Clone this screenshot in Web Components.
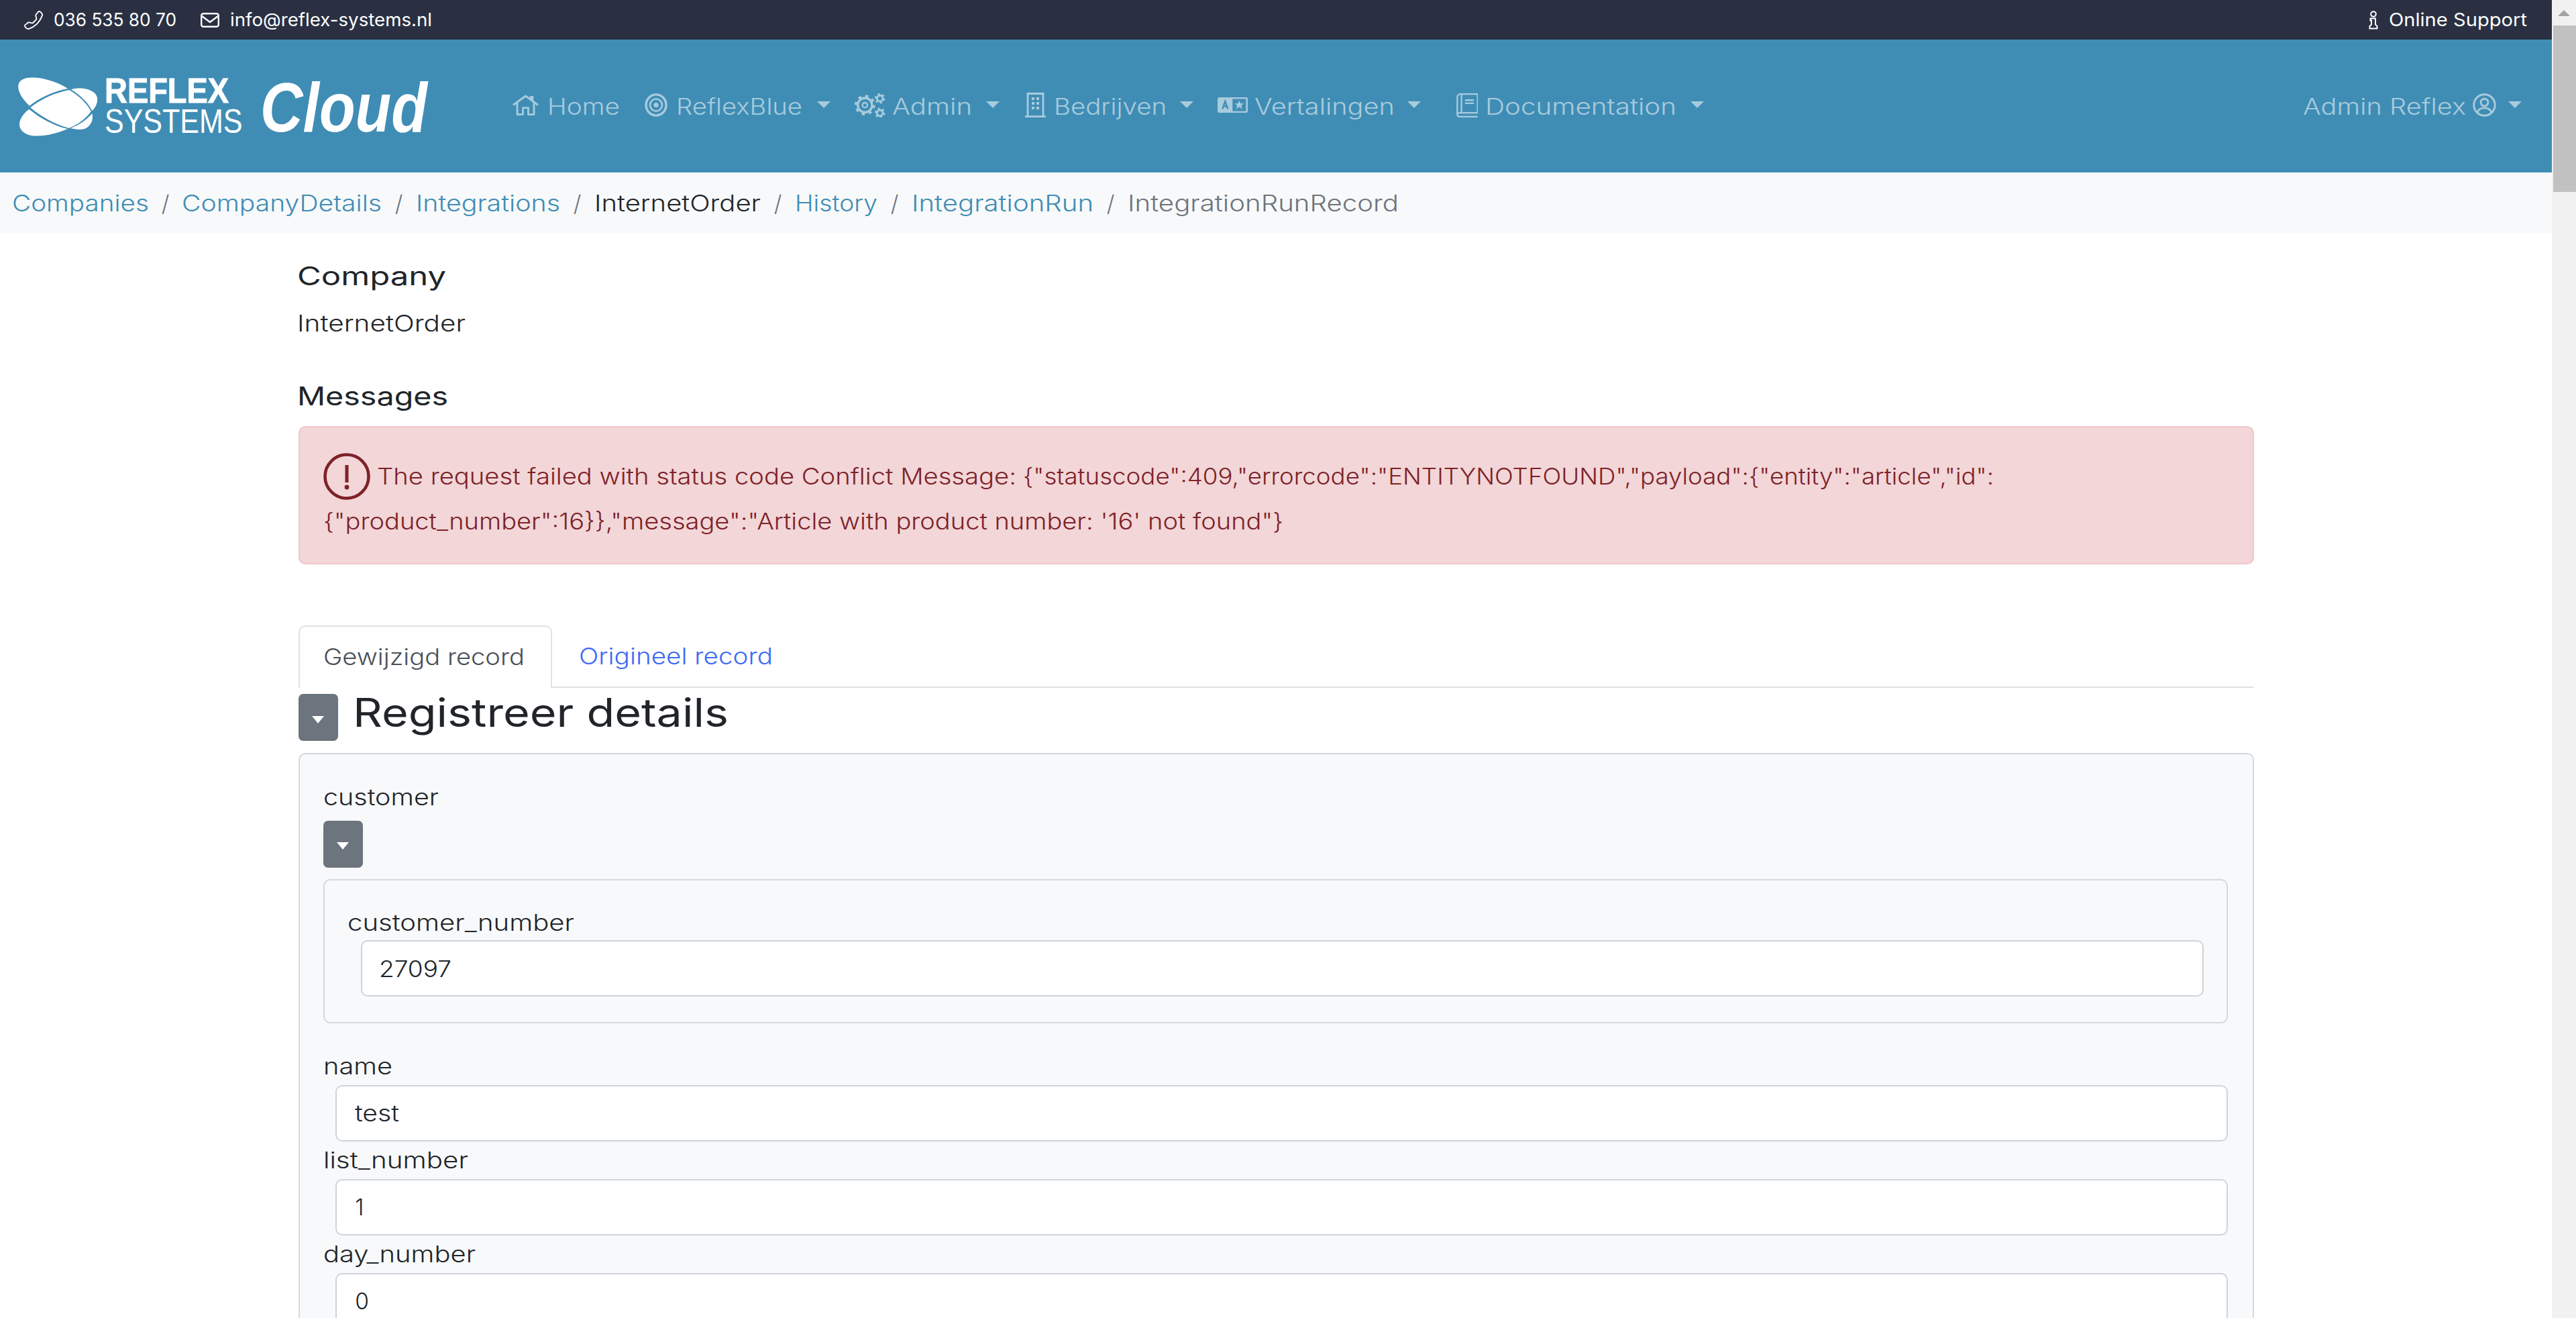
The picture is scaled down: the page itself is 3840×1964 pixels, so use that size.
<!DOCTYPE html>
<html lang="nl">
<head>
<meta charset="utf-8">
<title>Reflex Systems Cloud</title>
<style>
html,body{margin:0;padding:0;height:1964px;overflow:hidden;background:#fff}
body{font-family:Inter,"Noto Sans",sans-serif;font-size:33.6px;font-weight:300;color:#212529}
</style>
</head>
<body>
<rs-app>
  <rs-main>
    <rs-topbar>
      <rs-contact>
        <svg slot="icon" width="28" height="28" viewBox="0 0 16 16" fill="#fff"><path transform="translate(16 0) scale(-1 1)" d="M3.654 1.328a.678.678 0 0 0-1.015-.063L1.605 2.3c-.483.484-.661 1.169-.45 1.77a17.568 17.568 0 0 0 4.168 6.608 17.569 17.569 0 0 0 6.608 4.168c.601.211 1.286.033 1.77-.45l1.034-1.034a.678.678 0 0 0-.063-1.015l-2.307-1.794a.678.678 0 0 0-.58-.122l-2.19.547a1.745 1.745 0 0 1-1.657-.459L5.482 8.062a1.745 1.745 0 0 1-.46-1.657l.548-2.19a.678.678 0 0 0-.122-.58L3.654 1.328zM1.884.511a1.745 1.745 0 0 1 2.612.163L6.29 2.98c.329.423.445.974.315 1.494l-.547 2.19a.678.678 0 0 0 .178.643l2.457 2.457a.678.678 0 0 0 .644.178l2.189-.547a1.745 1.745 0 0 1 1.494.315l2.306 1.794c.829.645.905 1.87.163 2.611l-1.034 1.034c-.74.74-1.846 1.065-2.877.702a18.634 18.634 0 0 1-7.01-4.42 18.634 18.634 0 0 1-4.42-7.009c-.362-1.03-.037-2.137.703-2.877L1.885.511z"/></svg>
        <fit-text w="183">036 535 80 70</fit-text>
      </rs-contact>
      <rs-contact style="margin-left:36px">
        <svg slot="icon" width="28" height="22" viewBox="0 0 28 22" fill="none" stroke="#fff" stroke-width="2.4"><rect x="1.2" y="1.2" width="25.6" height="19.6" rx="3"/><path d="M2 5l12 9 12-9"/></svg>
        <fit-text w="301">info@reflex-systems.nl</fit-text>
      </rs-contact>
      <rs-contact style="margin-left:auto">
        <svg slot="icon" width="14" height="28" viewBox="0 0 14 28" fill="none" stroke="#fff" stroke-width="2"><circle cx="7" cy="5" r="3.8"/><path d="M2.5 11.5h7.5v9l2.5 2.5v3.5h-11v-3.5l2.5-2.5v-6h-1.5z"/></svg>
        <fit-text w="206">Online Support</fit-text>
      </rs-contact>
    </rs-topbar>

    <rs-navbar>
      <rs-logo>
        <svg slot="mark" width="140" height="105" viewBox="0 0 420 315" fill="#fff">
          <path d="M72 155C40 125 18 90 22 62C28 30 70 25 110 30C160 36 215 58 243 78C180 90 115 120 72 155Z"/>
          <path d="M258 82C290 72 340 75 365 100C385 122 375 155 352 178C335 140 295 105 258 82Z"/>
          <path d="M76 163C120 125 190 95 250 84C292 110 330 145 347 180C325 212 290 238 248 255C190 240 125 205 76 163Z"/>
          <path d="M70 170C120 212 185 245 242 258C200 278 130 295 80 288C40 280 22 255 28 228C33 205 50 185 70 170Z"/>
          <path d="M352 190C358 215 350 240 325 255C305 265 275 260 256 256C295 240 330 215 352 190Z"/>
        </svg>
      </rs-logo>
      <nav-item style="margin-left:130px;--g:12px">
        <svg slot="icon" width="41" height="31" viewBox="0 0 41 31" fill="none" stroke="currentColor" stroke-width="2.8" stroke-linejoin="round"><path d="M2 15.5L20.5 2L39 15.5M8 11v18.6h8.5v-10h8v10H33V11M31 9V3.5h-3v3"/></svg>
        <fit-text w="108">Home</fit-text>
      </nav-item>
      <nav-item caret style="margin-left:37px;--g:13px;--c:22px">
        <svg slot="icon" width="34" height="35" viewBox="0 0 34 35" fill="none" stroke="currentColor"><ellipse cx="17" cy="17.500" rx="15" ry="15.600" stroke-width="3.4"/><circle cx="17" cy="17.500" r="9" stroke-width="2.6"/><circle cx="17" cy="17.500" r="3.600" fill="currentColor" stroke="none"/></svg>
        <fit-text w="188">ReflexBlue</fit-text>
      </nav-item>
      <nav-item caret style="margin-left:36px;--g:10px;--c:21px">
        <svg slot="icon" width="46" height="36" viewBox="42 27 138 108" fill="none" stroke="currentColor"><circle cx="88" cy="80" r="32" stroke-width="10"/><circle cx="88" cy="80" r="41" stroke-width="10" stroke-dasharray="14 18.2"/><circle cx="88" cy="80" r="11" stroke-width="7"/><circle cx="155" cy="50" r="13" stroke-width="9"/><circle cx="155" cy="50" r="20" stroke-width="7" stroke-dasharray="10 10.9"/><circle cx="155" cy="115" r="13" stroke-width="9"/><circle cx="155" cy="115" r="20" stroke-width="7" stroke-dasharray="10 10.9"/></svg>
        <fit-text w="119">Admin</fit-text>
      </nav-item>
      <nav-item caret style="margin-left:38px;--g:12px;--c:20px">
        <svg slot="icon" width="31" height="37" viewBox="0 0 31 37" fill="none" stroke="currentColor" stroke-width="2.8"><path d="M0 35.600h31M4 35.600V1.500h23v34.100"/><path fill="currentColor" stroke="none" d="M10 7h4v4h-4zM17 7h4v4h-4zM10 14h4v4h-4zM17 14h4v4h-4zM10 21h4v4h-4zM17 21h4v4h-4z"/></svg>
        <fit-text w="168">Bedrijven</fit-text>
      </nav-item>
      <nav-item caret style="margin-left:36px;--g:10px;--c:19px">
        <svg slot="icon" width="45" height="23" viewBox="33 48 135 69"><rect x="33" y="48" width="135" height="69" rx="7" fill="currentColor"/><rect x="100" y="55" width="60" height="55" fill="#3f8db5"/><path d="M55 100L67 66L79 100M60 88H74" fill="none" stroke="#3f8db5" stroke-width="7"/><path d="M130 62l6 14h15l-12 9 5 16-14-10-14 10 5-16-12-9h15z" fill="currentColor"/></svg>
        <fit-text w="209">Vertalingen</fit-text>
      </nav-item>
      <nav-item caret style="margin-left:53px;--g:11px;--c:21px">
        <svg slot="icon" width="32" height="36" viewBox="29 27 97 109" fill="none" stroke="currentColor" stroke-width="7"><path d="M125 115V30H48C38 30 33 38 33 45V120C33 128 38 133 45 133H125M33 122C33 117 38 115 45 115H125M52 30V115M68 58H108M68 72H108"/></svg>
        <fit-text w="285">Documentation</fit-text>
      </nav-item>
      <nav-item caret reverse style="margin-left:auto;margin-right:45px;--g:10px;--c:18px">
        <svg slot="icon" width="35" height="35" viewBox="0 0 36 36" fill="none" stroke="currentColor" stroke-width="3"><circle cx="18" cy="18" r="16.200"/><circle cx="18" cy="14" r="5.600"/><path d="M7 29.500C9 23.500 14 22.500 18 22.500S27 23.500 29 29.500"/></svg>
        <fit-text w="243">Admin Reflex</fit-text>
      </nav-item>
    </rs-navbar>

    <rs-breadcrumb>
      <a><fit-text w="204">Companies</fit-text></a><i style="width:13px">/</i>
      <a><fit-text w="298">CompanyDetails</fit-text></a><i>/</i>
      <a><fit-text w="215">Integrations</fit-text></a><i>/</i>
      <b><fit-text w="248">InternetOrder</fit-text></b><i>/</i>
      <a><fit-text w="123">History</fit-text></a><i>/</i>
      <a><fit-text w="271">IntegrationRun</fit-text></a><i>/</i>
      <u><fit-text w="404">IntegrationRunRecord</fit-text></u>
    </rs-breadcrumb>

    <rs-content>
      <rs-section-title style="margin-top:36px"><fit-text w="222">Company</fit-text></rs-section-title>
      <rs-text style="margin-top:18px"><fit-text w="251">InternetOrder</fit-text></rs-text>
      <rs-section-title style="margin-top:55px"><fit-text w="225">Messages</fit-text></rs-section-title>
      <rs-alert>
        <fit-text w="953">The request failed with status code Conflict Message:</fit-text>
        <fit-text w="1447" style="margin-left:10px">{"statuscode":409,"errorcode":"ENTITYNOTFOUND","payload":{"entity":"article","id":</fit-text>
        <fit-text slot="second" w="1431">{"product_number":16}},"message":"Article with product number: '16' not found"}</fit-text>
      </rs-alert>
      <rs-tabs>
        <fit-text slot="active" w="300">Gewijzigd record</fit-text>
        <fit-text w="289">Origineel record</fit-text>
      </rs-tabs>
      <rs-heading><fit-text w="560">Registreer details</fit-text></rs-heading>
      <rs-card>
        <rs-label><fit-text w="172">customer</fit-text></rs-label>
        <rs-toggle style="margin-top:10px"></rs-toggle>
        <rs-box>
          <rs-field nested>
            <fit-text slot="label" w="338">customer_number</fit-text>
            <fit-text w="108">27097</fit-text>
          </rs-field>
        </rs-box>
        <rs-field style="margin-top:41px"><fit-text slot="label" w="103">name</fit-text><fit-text w="66">test</fit-text></rs-field>
        <rs-field style="margin-top:5px"><fit-text slot="label" w="216">list_number</fit-text>1</rs-field>
        <rs-field style="margin-top:5px"><fit-text slot="label" w="227">day_number</fit-text>0</rs-field>
      </rs-card>
    </rs-content>
  </rs-main>
  <rs-scrollbar></rs-scrollbar>
</rs-app>

<script>
const def = (name, html) => customElements.define(name, class extends HTMLElement {
  constructor() { super(); this.attachShadow({ mode: 'open' }).innerHTML = html; }
});

def('rs-app', `<style>:host{display:flex;width:3840px;height:1964px;overflow:hidden}</style><slot></slot>`);
def('rs-main', `<style>:host{display:flex;flex-direction:column;flex:1 1 auto;min-width:0;height:1964px;overflow:hidden}</style><slot></slot>`);
def('rs-scrollbar', `<style>
  :host{display:flex;flex-direction:column;flex:0 0 36px;width:36px;height:1964px;background:#f1f1f1}
  .up{height:38px;display:flex;align-items:flex-start;justify-content:center}
  .up::before{content:"";margin-top:15px;border-left:9px solid transparent;border-right:9px solid transparent;border-bottom:9px solid #a3a3a3}
  .thumb{height:248px;margin-left:2px;background:#c1c1c1}
</style><div class="up"></div><div class="thumb"></div>`);

def('rs-topbar', `<style>:host{display:flex;align-items:center;flex:0 0 59px;height:59px;box-sizing:border-box;padding:0 37px 0 36px;background:#2a3042;color:#fff;font-size:27px;font-weight:400}</style><slot></slot>`);
def('rs-contact', `<style>:host{display:flex;align-items:center;gap:16px}::slotted(svg){display:block;flex:none}</style><slot name="icon"></slot><slot></slot>`);

def('rs-navbar', `<style>:host{display:flex;align-items:center;flex:0 0 198px;height:198px;box-sizing:border-box;padding-left:20px;background:#3f8db5;color:#a8cbdd;font-size:33.6px}</style><slot></slot>`);
def('rs-logo', `<style>
  :host{display:flex;align-items:center;color:#fff;font-family:"Liberation Sans",Arial,sans-serif;flex:none}
  ::slotted(svg){display:block;flex:none}
  .words{width:205px;margin-left:-4px;height:90px;flex:none}
  .r,.s{display:block;white-space:nowrap;transform-origin:0 50%;line-height:45px}
  .r{font-weight:700;font-size:51px;transform:scaleX(.92);-webkit-text-stroke:1px #fff}
  .s{font-size:50px;transform:scaleX(.86);position:relative;top:1px}
  .c{width:245px;margin-left:27px;margin-top:3px;font-weight:700;font-style:italic;font-size:104px;line-height:90px;white-space:nowrap;transform-origin:0 50%;transform:scaleX(.845);flex:none}
</style><slot name="mark"></slot><div class="words"><span class="r">REFLEX</span><span class="s">SYSTEMS</span></div><div class="c">Cloud</div>`);
def('nav-item', `<style>
  :host{display:flex;align-items:center;flex:none}
  :host([reverse]) .ic{order:2;margin-left:var(--g);margin-right:0}
  :host([reverse]) .tx{order:1}
  :host([reverse]) .ca{order:3}
  .ic{display:flex;margin-right:var(--g);margin-top:-3px}
  .tx{display:block;line-height:50px;margin-top:2px}
  .ca{display:none;margin-left:var(--c);width:0;height:0;border-left:10.5px solid transparent;border-right:10.5px solid transparent;border-top:10.5px solid currentColor;margin-top:-4px}
  :host([caret]) .ca{display:block}
  ::slotted(svg){display:block}
</style><span class="ic"><slot name="icon"></slot></span><span class="tx"><slot></slot></span><span class="ca"></span>`);

def('rs-breadcrumb', `<style>
  :host{display:flex;align-items:center;flex:0 0 90px;height:90px;box-sizing:border-box;padding-left:18px;gap:18px;background:#f8f9fa;font-size:33.6px;color:#3f8db5}
  ::slotted(i){width:15px;text-align:center;font-style:normal;color:#6c757d;flex:none}
  ::slotted(a){color:#3f8db5}
  ::slotted(b){color:#212529;font-weight:300}
  ::slotted(u){color:#6c757d;text-decoration:none}
</style><slot></slot>`);

def('rs-content', `<style>:host{display:block;padding:0 444px 0 444.600px;flex:1 1 auto;min-height:0}</style><slot></slot>`);
def('rs-section-title', `<style>:host{display:block;font-size:38.4px;line-height:56px;color:#212529;font-weight:400;margin-left:-2px}</style><slot></slot>`);
def('rs-text', `<style>:host{display:block;font-size:33.6px;line-height:50px;color:#212529;margin-left:-2px}</style><slot></slot>`);
def('rs-alert', `<style>
  :host{display:block;margin-top:17px;height:206px;box-sizing:border-box;padding:39px 37px 0 35px;background:#f3d6d8;border:2.4px solid #f1c4c8;border-radius:10px;color:#7d2228;font-size:33.6px}
  .l1{display:flex;align-items:center;height:67px}
  .l2{display:flex;align-items:center;height:67px}
  svg{display:block;flex:none;margin-right:10px}
</style>
<div class="l1"><svg width="70" height="70" viewBox="0 0 70 70" fill="none" stroke="#7d2228" stroke-width="4.600"><circle cx="35" cy="35" r="32.500"/><path d="M35 18V44" stroke-width="5"/><circle cx="35" cy="51" r="3.400" fill="#7d2228" stroke="none"/></svg><slot></slot></div>
<div class="l2"><slot name="second"></slot></div>`);

def('rs-tabs', `<style>
  :host{display:flex;margin-top:91px;height:93px;box-sizing:border-box;border-bottom:2.4px solid #dee2e6;font-size:33.6px}
  .on{display:flex;align-items:center;box-sizing:border-box;height:93px;width:378.500px;padding-left:35px;padding-bottom:3px;border:2.4px solid #dee2e6;border-bottom:0;border-radius:10px 10px 0 0;background:#fff;color:#495057}
  .off{display:flex;align-items:center;height:90px;padding-left:39.500px;color:#3d6bf5}
</style><div class="on"><slot name="active"></slot></div><div class="off"><slot></slot></div>`);

const caret = `<span style="width:0;height:0;border-left:9.500px solid transparent;border-right:9.500px solid transparent;border-top:11px solid #fff;margin-top:6px"></span>`;
def('rs-toggle', `<style>:host{display:flex;align-items:center;justify-content:center;width:59px;height:70px;background:#6c757d;border-radius:7px;flex:none}</style>${caret}`);
def('rs-heading', `<style>
  :host{display:flex;align-items:flex-start;margin-top:9px;gap:22px;font-size:58.800px;line-height:56px;color:#212529;height:70px;font-weight:400}
</style><rs-toggle></rs-toggle><slot></slot>`);
def('rs-card', `<style>
  :host{display:block;margin-top:18px;box-sizing:border-box;padding:38.600px 36.600px 40px 35px;background:#f8f9fa;border:2.4px solid #d5d8db;border-radius:10px;min-height:1000px}
</style><slot></slot>`);
def('rs-label', `<style>:host{display:block;line-height:50px;font-size:33.6px;color:#212529}</style><slot></slot>`);
def('rs-box', `<style>:host{display:block;margin-top:17px;height:215px;box-sizing:border-box;padding:38px 34.600px 0 34.600px;border:2.4px solid #d5d8db;border-radius:10px}</style><slot></slot>`);
def('rs-field', `<style>
  :host{display:block;font-size:33.6px;color:#212529}
  .lb{line-height:50px;height:50px;overflow:visible}
  .lb ::slotted(*){position:relative;top:-2px}
  .in{display:flex;align-items:center;height:84px;box-sizing:border-box;margin:1px 0 0 18px;padding-left:27.600px;background:#fff;border:2.4px solid #ced4da;border-radius:10px;color:#212529}
  :host([nested]) .in{margin:1.600px 0 0 20px;padding-left:25px}
  :host([nested]) .lb ::slotted(*){top:0}
</style><div class="lb"><slot name="label"></slot></div><div class="in"><slot></slot></div>`);

const fits = [];
customElements.define('fit-text', class extends HTMLElement {
  constructor() {
    super();
    this.attachShadow({ mode: 'open' }).innerHTML = `<style>:host{display:inline-block;white-space:nowrap;flex:none;transform-origin:0 50%}</style><slot></slot>`;
  }
  connectedCallback() { fits.push(this); }
  fit() {
    const nat = this.getBoundingClientRect().width;
    const w = parseFloat(this.getAttribute('w'));
    this.style.transform = 'scaleX(' + (w / nat) + ')';
    this.style.marginRight = (w - nat) + 'px';
  }
});
fits.forEach(f => f.fit());
</script>
</body>
</html>
